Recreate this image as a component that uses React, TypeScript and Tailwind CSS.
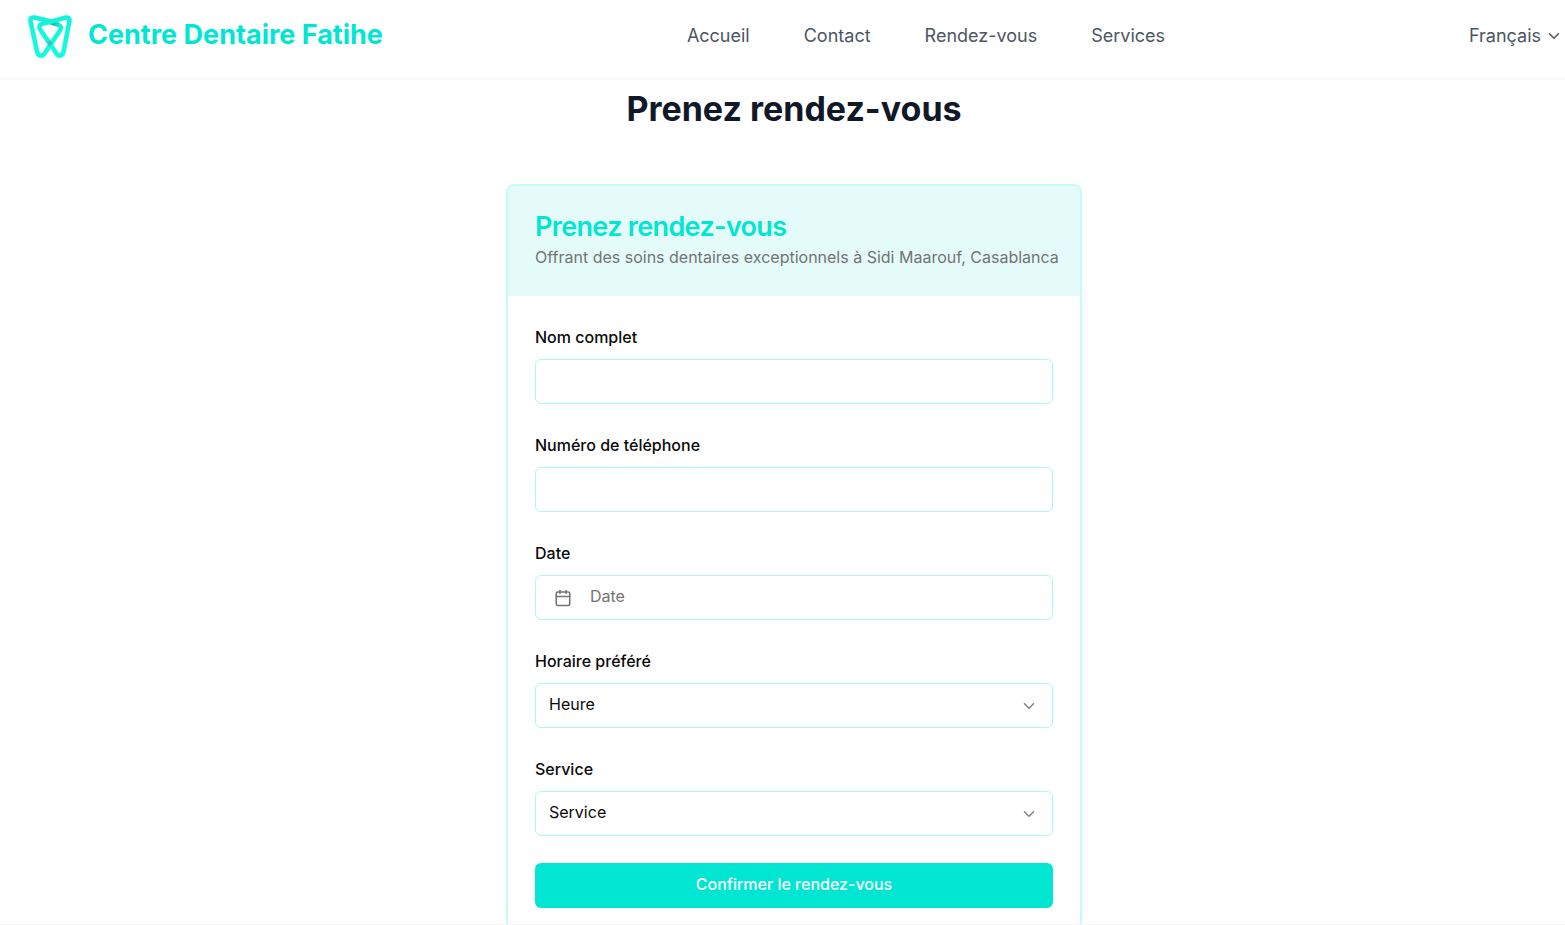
import { useState } from "react";
import type { ReactNode } from "react";
import { Calendar, ChevronDown } from "lucide-react";

const navLinks = [
  { label: "Accueil", href: "#accueil" },
  { label: "Contact", href: "#contact" },
  { label: "Rendez-vous", href: "#rendez-vous" },
  { label: "Services", href: "#services" },
];

const hours = ["09:00", "10:00", "11:00", "14:00", "15:00", "16:00"];
const services = ["Détartrage", "Blanchiment", "Implants", "Orthodontie"];

const fieldStyle =
  "h-[45px] w-full rounded-md border border-[#adf7ef] bg-white text-base text-neutral-950 outline-none focus:border-[#00e6d2]";

function Logo() {
  return (
    <svg
      viewBox="0 0 50 50"
      fill="none"
      strokeWidth="4.6"
      strokeLinecap="round"
      strokeLinejoin="round"
      className="size-[50px]"
      aria-hidden="true"
    >
      <defs>
        <linearGradient id="tooth" x1="0" y1="0" x2="0" y2="1">
          <stop offset="0" stopColor="#14f3da" />
          <stop offset="1" stopColor="#14fbe2" />
        </linearGradient>
        <linearGradient
          id="fold"
          gradientUnits="userSpaceOnUse"
          x1="21"
          y1="10"
          x2="35"
          y2="14"
        >
          <stop offset="0" stopColor="#1fb5a6" stopOpacity="0" />
          <stop offset="0.5" stopColor="#1fb5a6" />
          <stop offset="1" stopColor="#1fb5a6" stopOpacity="0" />
        </linearGradient>
      </defs>
      <path
        d="M24 10 L9.6 6.6 Q4.8 5.9 5.6 10.4 L12 40.4 Q12.8 44.6 16 44.6 Q18.2 44.6 19.8 42 L34.6 20 Q37.8 15.4 33 13.6 L22 10"
        stroke="url(#tooth)"
      />
      <path d="M21 9.8 L33.5 13.8" stroke="url(#fold)" />
      <path d="M22 28.6 L26 34" stroke="#2accbc" />
      <path
        d="M27 35.6 L31 42 Q32.6 44.6 34.6 44.6 Q37.6 44.6 38.6 40.4 L44.4 10.4 Q45.2 5.9 40.4 6.6 L17.4 12.8 Q12.4 14.4 15.6 19.2 L22.2 28.8"
        stroke="url(#tooth)"
      />
    </svg>
  );
}

function Header() {
  return (
    <header className="flex h-20 items-start justify-between border-b-2 border-gray-50 pr-0.5 pl-[25px] pt-[11px]">
      <a href="#accueil" className="flex items-center gap-[13px]">
        <Logo />
        <span className="pb-0.5 text-[27px] leading-9 font-bold text-[#00e6d2]">
          Centre Dentaire Fatihe
        </span>
      </a>
      <nav aria-label="Navigation principale" className="pt-[11px]">
        <ul className="flex gap-[54px]">
          {navLinks.map((link) => (
            <li key={link.label}>
              <a
                href={link.href}
                className="text-lg leading-7 text-[#4b5563] hover:text-[#00e6d2]"
              >
                {link.label}
              </a>
            </li>
          ))}
        </ul>
      </nav>
      <button
        type="button"
        className="flex items-center gap-1 pt-[11px] text-lg leading-7 text-[#4b5563]"
      >
        Français
        <ChevronDown className="size-[18px]" />
      </button>
    </header>
  );
}

function Field({
  id,
  label,
  children,
}: {
  id: string;
  label: string;
  children: ReactNode;
}) {
  return (
    <div className="flex flex-col gap-2">
      <label
        htmlFor={id}
        className="text-base leading-7 font-medium text-neutral-950"
      >
        {label}
      </label>
      {children}
    </div>
  );
}

function SelectField({
  id,
  label,
  placeholder,
  options,
}: {
  id: string;
  label: string;
  placeholder: string;
  options: string[];
}) {
  const [value, setValue] = useState("");

  return (
    <Field id={id} label={label}>
      <div className="relative">
        <select
          id={id}
          value={value}
          onChange={(e) => setValue(e.target.value)}
          className={`${fieldStyle} appearance-none px-[13px] pb-1`}
        >
          <option value="">{placeholder}</option>
          {options.map((option) => (
            <option key={option}>{option}</option>
          ))}
        </select>
        <ChevronDown className="pointer-events-none absolute top-[14px] right-[15px] size-[18px] opacity-50" />
      </div>
    </Field>
  );
}

function BookingCard() {
  return (
    <section className="w-full max-w-xl overflow-hidden rounded-lg border-2 border-[#c8fbf7] bg-white">
      <div className="bg-[#e5fbf9] px-[27px] pt-[25px] pb-[25px]">
        <h2 className="text-[27px] leading-8 font-semibold tracking-tight text-[#00e6d2]">
          Prenez rendez-vous
        </h2>
        <p className="text-base leading-7 text-[#737373] sm:whitespace-nowrap">
          Offrant des soins dentaires exceptionnels à Sidi Maarouf, Casablanca
        </p>
      </div>
      <form
        className="flex flex-col gap-[27px] px-[27px] pt-[27px] pb-[27px]"
        onSubmit={(e) => e.preventDefault()}
      >
        <Field id="name" label="Nom complet">
          <input id="name" type="text" className={`${fieldStyle} px-[13px]`} />
        </Field>
        <Field id="phone" label="Numéro de téléphone">
          <input id="phone" type="tel" className={`${fieldStyle} px-[13px]`} />
        </Field>
        <Field id="date" label="Date">
          <button
            id="date"
            type="button"
            className={`${fieldStyle} flex items-center gap-[18px] px-[18px]`}
          >
            <Calendar className="size-[18px] text-[#737373]" />
            <span className="pb-1 text-[#737373]">Date</span>
          </button>
        </Field>
        <SelectField
          id="time"
          label="Horaire préféré"
          placeholder="Heure"
          options={hours}
        />
        <SelectField
          id="service"
          label="Service"
          placeholder="Service"
          options={services}
        />
        <button
          type="submit"
          className="h-[45px] rounded-md bg-[#00e6d2] pb-1 text-base font-medium text-white hover:bg-[#00cfbd]"
        >
          Confirmer le rendez-vous
        </button>
      </form>
    </section>
  );
}

export default function App() {
  return (
    <div className="min-h-screen bg-white font-[Inter,sans-serif] text-neutral-950">
      <Header />
      <main className="flex flex-col items-center gap-[54px] pb-12 pl-[23px]">
        <h1 className="pt-2 text-[34px] leading-[42px] font-bold text-[#111827]">
          Prenez rendez-vous
        </h1>
        <BookingCard />
      </main>
      <div className="fixed inset-x-0 bottom-0 h-px bg-gray-100" />
    </div>
  );
}
